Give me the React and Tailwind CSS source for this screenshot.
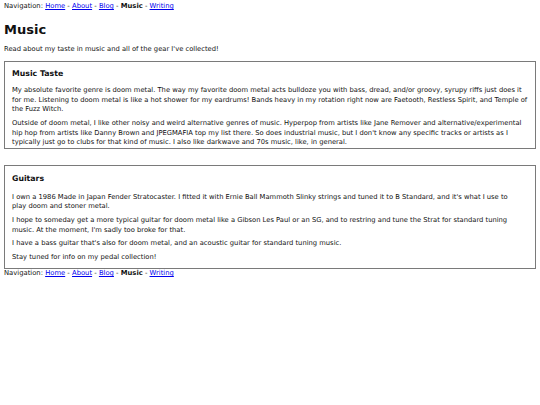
const font = { fontFamily: '"DejaVu Sans", Verdana, sans-serif' }

function Nav() {
  return (
    <p className="text-[6.8px] leading-[9.6px] text-[#111]">
      Navigation: <a href="#" className="text-[#0000ee] underline">Home</a> -{" "}
      <a href="#" className="text-[#0000ee] underline">About</a> -{" "}
      <a href="#" className="text-[#0000ee] underline">Blog</a> -{" "}
      <b>Music</b> -{" "}
      <a href="#" className="text-[#0000ee] underline">Writing</a>
    </p>
  )
}

function Section({ title, className, headClass, children }) {
  return (
    <section className={`border border-[#7a7a7a] px-[7px] ${className}`}>
      <h2 className={`text-[7.8px] leading-[12px] font-bold ${headClass}`}>{title}</h2>
      <div className="flex flex-col gap-[4px] text-[6.75px] leading-[9.6px]">
        {children}
      </div>
    </section>
  )
}

export default function App() {
  return (
    <div className="w-[540px] h-[405px] bg-white px-[4px] pt-[2px] text-[#111]" style={font}>
      <Nav />
      <h1 className="text-[13px] leading-[19.5px] font-bold mt-[8.6px]">Music</h1>
      <p className="text-[6.75px] leading-[9.6px] mt-[5.5px]">
        Read about my taste in music and all of the gear I've collected!
      </p>
      <div className="mt-[6.5px]">
        <Section title="Music Taste" className="pt-[6px] pb-0" headClass="mb-[6px]">
          <p>
            My absolute favorite genre is doom metal. The way my favorite doom metal acts bulldoze you with bass, dread, and/or groovy, syrupy riffs just does it for me. Listening to doom metal is like a hot shower for my eardrums! Bands heavy in my rotation right now are Faetooth, Restless Spirit, and Temple of the Fuzz Witch.
          </p>
          <p>
            Outside of doom metal, I like other noisy and weird alternative genres of music. Hyperpop from artists like Jane Remover and alternative/experimental hip hop from artists like Danny Brown and JPEGMAFIA top my list there. So does industrial music, but I don't know any specific tracks or artists as I typically just go to clubs for that kind of music. I also like darkwave and 70s music, like, in general.
          </p>
        </Section>
      </div>
      <div className="mt-[16px]">
        <Section title="Guitars" className="pt-[7px] pb-[6px]" headClass="mb-[8px]">
          <p>
            I own a 1986 Made in Japan Fender Stratocaster. I fitted it with Ernie Ball Mammoth Slinky strings and tuned it to B Standard, and it's what I use to<br />
            play doom and stoner metal.
          </p>
          <p>
            I hope to someday get a more typical guitar for doom metal like a Gibson Les Paul or an SG, and to restring and tune the Strat for standard tuning music. At the moment, I'm sadly too broke for that.
          </p>
          <p>I have a bass guitar that's also for doom metal, and an acoustic guitar for standard tuning music.</p>
          <p>Stay tuned for info on my pedal collection!</p>
        </Section>
      </div>
      <Nav />
    </div>
  )
}
